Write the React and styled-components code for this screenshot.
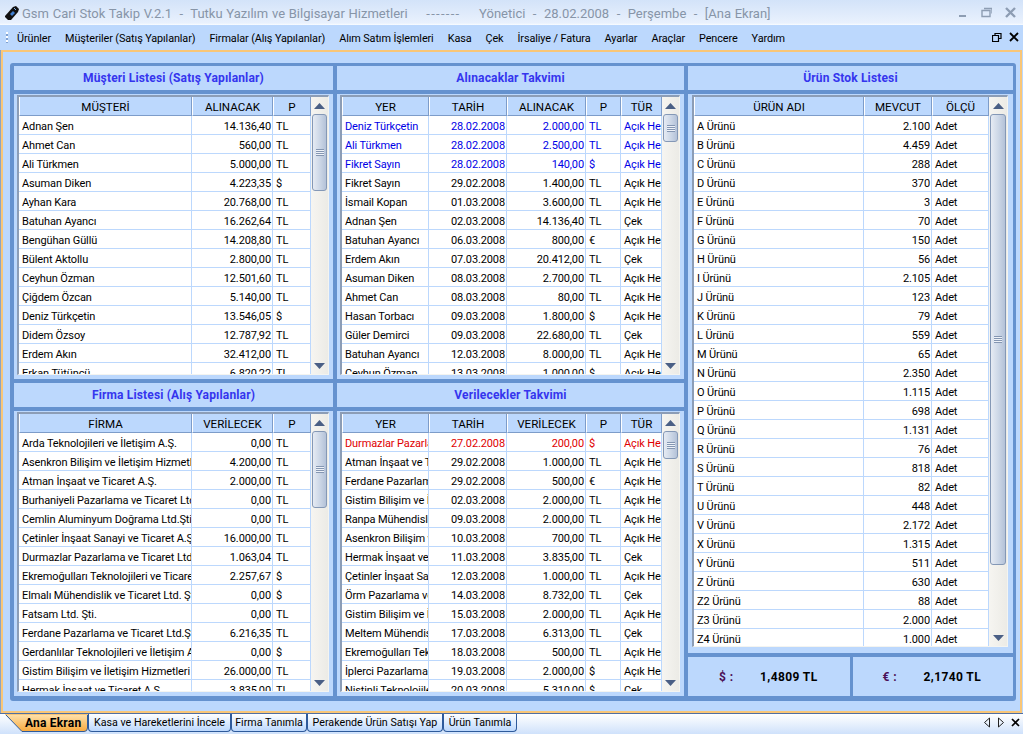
import React from "react";
import styled, { createGlobalStyle } from "styled-components";

const SKY = "#bcd8fd";
const STEEL = "#6592cf";
const FONT = `Roboto, "Liberation Sans", sans-serif`;

const GlobalStyle = createGlobalStyle`
  html, body {
    margin: 0;
    padding: 0;
    background: ${SKY};
  }
  * {
    box-sizing: border-box;
  }
`;

const Shell = styled.div`
  width: 1023px;
  height: 734px;
  display: flex;
  flex-direction: column;
  overflow: hidden;
  font-family: ${FONT};
  font-size: 11px;
  color: #000;
  background: ${SKY};
`;

const TitleBar = styled.div`
  height: 25px;
  flex: none;
  display: flex;
  align-items: center;
  padding: 0 6px 0 4px;
  background: linear-gradient(#d3e3f9, #e9f1fd 92%, #fafcff);
`;

const AppIcon = styled.svg`
  width: 16px;
  height: 16px;
  flex: none;
  margin-right: 2px;
`;

const TitleText = styled.div`
  flex: 1;
  padding-top: 1px;
  font-size: 13px;
  word-spacing: 0.5px;
  white-space: pre;
  color: #8795a8;
`;

const TitleDashes = styled.span`
  letter-spacing: 1.3px;
`;

const WinButtons = styled.div`
  display: flex;
  gap: 9px;
  align-items: center;
`;

const MenuBar = styled.div`
  height: 25px;
  flex: none;
  display: flex;
  align-items: center;
  padding: 0 3px 0 6px;
  background: ${SKY};
`;

const Grip = styled.div`
  width: 2px;
  height: 11px;
  margin-right: 9px;
  background: repeating-linear-gradient(#fff 0 2px, #7fa0d0 2px 4px);
`;

const MenuList = styled.div`
  flex: 1;
  display: flex;
  gap: 14px;
  padding-top: 2px;
`;

const MenuItem = styled.span`
  white-space: nowrap;
  font-size: 10.85px;
  letter-spacing: -0.1px;
`;

const MdiButtons = styled.div`
  display: flex;
  gap: 7px;
  align-items: center;
  margin-bottom: 2px;
  margin-right: 1px;
`;

const Workspace = styled.div`
  height: 663px;
  flex: none;
  padding: 11px 4px 10px 7px;
  border: 2px solid #f9c677;
  border-bottom-width: 2px;
  box-shadow: -1px 0 0 #8ba3c4;
  margin-left: 1px;
  margin-right: 1px;
`;

const Board = styled.div`
  height: 100%;
  display: grid;
  grid-template-columns: 319px 347px 325px;
  grid-template-rows: 313px 313px;
  gap: 4px;
  padding: 3px 3px 4px 4px;
  background: ${STEEL};
  border-radius: 3px;
`;

const Section = styled.section`
  display: flex;
  flex-direction: column;
  min-height: 0;
  background: ${SKY};
  flex: 1;
`;

const StockColumn = styled.div`
  grid-column: 3;
  grid-row: 1 / span 2;
  display: flex;
  flex-direction: column;
  gap: 4px;
  min-height: 0;
`;

const SectionTitle = styled.h2`
  margin: 0;
  height: 28px;
  flex: none;
  display: flex;
  align-items: center;
  justify-content: center;
  font-size: 12px;
  font-weight: 700;
  letter-spacing: 0.15px;
  color: #3535ee;
  border-bottom: 4px solid ${STEEL};
`;

const SectionBody = styled.div`
  flex: 1;
  min-height: 0;
  display: flex;
  padding: ${(p) => p.$inset};
`;

const Grid = styled.div`
  flex: 1;
  min-width: 0;
  display: flex;
  border-style: solid;
  border-width: 2px 1px 1px 2px;
  border-color: #8c9db6 #f4f4f0 #f4f4f0 #8c9db6;
  background: #fff;
  overflow: hidden;
`;

const GridTable = styled.div`
  flex: none;
  overflow: hidden;
  display: flex;
  flex-direction: column;
`;

const HeadRow = styled.div`
  display: grid;
  grid-template-columns: ${(p) => p.$cols};
  height: 19px;
  flex: none;
`;

const HeadCell = styled.div`
  display: flex;
  align-items: center;
  justify-content: center;
  padding-top: 1px;
  background: ${SKY};
  border-left: 1px solid #fff;
  border-right: 1px solid #7d9cc9;
  border-bottom: 1px solid #7d9cc9;
  font-size: 11.6px;
  white-space: nowrap;
  overflow: hidden;
`;

const Row = styled.div`
  display: grid;
  grid-template-columns: ${(p) => p.$cols};
  height: 19px;
  flex: none;
  color: ${(p) => p.$tone || "#000"};
`;

const Cell = styled.div`
  display: flex;
  align-items: center;
  justify-content: ${(p) => (p.$right ? "flex-end" : "flex-start")};
  padding: 2px 1px 0 3px;
  border-right: 1px solid ${SKY};
  border-bottom: 1px solid ${SKY};
  letter-spacing: -0.12px;
  white-space: nowrap;
  overflow: hidden;
`;

const ScrollBar = styled.div`
  flex: 1;
  display: flex;
  flex-direction: column;
  background: linear-gradient(90deg, #f6f5f1, #ecebe6);
`;

const ScrollArrow = styled.div`
  height: 17px;
  flex: none;
  display: flex;
  align-items: center;
  justify-content: center;
`;

const ScrollTrack = styled.div`
  flex: 1;
  min-height: 0;
  padding: 0 1px;
`;

const Thumb = styled.div`
  height: ${(p) => p.$size}px;
  display: flex;
  align-items: center;
  justify-content: center;
  border: 1px solid #8498b6;
  border-radius: 3px;
  background: linear-gradient(90deg, #e6ebf3, #cbd6e6 55%, #b4c2d8);
`;

const ThumbGrip = styled.div`
  width: 8px;
  height: 7px;
  background: repeating-linear-gradient(#8496b2 0 1px, #eef2f8 1px 2px);
`;

const RateRow = styled.div`
  height: 39px;
  flex: none;
  display: flex;
  gap: 3px;
`;

const RateBox = styled.div`
  flex: 1;
  display: flex;
  align-items: center;
  padding-left: ${(p) => p.$pad}px;
  background: ${SKY};
  font-size: 12px;
  font-weight: 700;
  letter-spacing: 0.4px;
`;

const RateSymbol = styled.span`
  width: 41px;
  color: #4b0f55;
`;

const TabBar = styled.div`
  flex: 1;
  display: flex;
  align-items: flex-start;
  padding: 0 0 0 5px;
  background: linear-gradient(#fff, #cfe1fb);
  border-top: 1px solid #4f6fa3;
`;

const ActiveTab = styled.div`
  position: relative;
  width: 83px;
  height: 18px;
  flex: none;
  padding: 0 0 1px 20px;
  display: flex;
  align-items: center;
  font-size: 12px;
  font-weight: 700;
  letter-spacing: 0.2px;
`;

const TabShape = styled.svg`
  position: absolute;
  left: 0;
  top: 0;
`;

const TabLabel = styled.span`
  position: relative;
`;

const Tab = styled.div`
  height: 18px;
  flex: none;
  width: ${(p) => p.$width}px;
  display: flex;
  align-items: center;
  justify-content: center;
  white-space: nowrap;
  font-size: 10.7px;
  border: 1px solid #2e5a9b;
  border-top: none;
  border-radius: 0 0 4px 4px;
  background: linear-gradient(#fff, #bcd8fd);
`;

const TabSpacer = styled.div`
  flex: 1;
`;

const TabNav = styled.div`
  display: flex;
  gap: 6px;
  align-items: center;
  padding: 3px 3px 0 0;
`;

const Triangle = ({ down }) => (
  <svg width="11" height="6" viewBox="0 0 11 6">
    <path d={down ? "M0 0H11L5.5 6Z" : "M5.5 0L11 6H0Z"} fill="#4a5f85" />
  </svg>
);

const Scroller = ({ thumb }) => (
  <ScrollBar>
    <ScrollArrow>
      <Triangle />
    </ScrollArrow>
    <ScrollTrack>
      <Thumb $size={thumb}>
        <ThumbGrip />
      </Thumb>
    </ScrollTrack>
    <ScrollArrow>
      <Triangle down />
    </ScrollArrow>
  </ScrollBar>
);

const DataTable = ({ widths, columns, rows, thumb, tones = {}, rightCols }) => {
  const cols = widths.map((w) => `${w}px`).join(" ");
  const total = widths.reduce((a, b) => a + b, 0);
  return (
    <Grid>
      <GridTable style={{ width: total }}>
        <HeadRow $cols={cols}>
          {columns.map((c) => (
            <HeadCell key={c}>{c}</HeadCell>
          ))}
        </HeadRow>
        {rows.map((r, i) => (
          <Row key={i} $cols={cols} $tone={tones[i]}>
            {r.map((v, j) => (
              <Cell key={j} $right={rightCols.includes(j)}>
                {v}
              </Cell>
            ))}
          </Row>
        ))}
      </GridTable>
      <Scroller thumb={thumb} />
    </Grid>
  );
};

const customers = [
  ["Adnan Şen", "14.136,40", "TL"],
  ["Ahmet Can", "560,00", "TL"],
  ["Ali Türkmen", "5.000,00", "TL"],
  ["Asuman Diken", "4.223,35", "$"],
  ["Ayhan Kara", "20.768,00", "TL"],
  ["Batuhan Ayancı", "16.262,64", "TL"],
  ["Bengühan Güllü", "14.208,80", "TL"],
  ["Bülent Aktollu", "2.800,00", "TL"],
  ["Ceyhun Özman", "12.501,60", "TL"],
  ["Çiğdem Özcan", "5.140,00", "TL"],
  ["Deniz Türkçetin", "13.546,05", "$"],
  ["Didem Özsoy", "12.787,92", "TL"],
  ["Erdem Akın", "32.412,00", "TL"],
  ["Erkan Tütüncü", "6.820,22", "TL"],
];

const receivables = [
  ["Deniz Türkçetin", "28.02.2008", "2.000,00", "TL", "Açık Hesap"],
  ["Ali Türkmen", "28.02.2008", "2.500,00", "TL", "Açık Hesap"],
  ["Fikret Sayın", "28.02.2008", "140,00", "$", "Açık Hesap"],
  ["Fikret Sayın", "29.02.2008", "1.400,00", "TL", "Açık Hesap"],
  ["İsmail Kopan", "01.03.2008", "3.600,00", "TL", "Açık Hesap"],
  ["Adnan Şen", "02.03.2008", "14.136,40", "TL", "Çek"],
  ["Batuhan Ayancı", "06.03.2008", "800,00", "€", "Açık Hesap"],
  ["Erdem Akın", "07.03.2008", "20.412,00", "TL", "Çek"],
  ["Asuman Diken", "08.03.2008", "2.700,00", "TL", "Açık Hesap"],
  ["Ahmet Can", "08.03.2008", "80,00", "TL", "Açık Hesap"],
  ["Hasan Torbacı", "09.03.2008", "1.800,00", "$", "Açık Hesap"],
  ["Güler Demirci", "09.03.2008", "22.680,00", "TL", "Çek"],
  ["Batuhan Ayancı", "12.03.2008", "8.000,00", "TL", "Açık Hesap"],
  ["Ceyhun Özman", "13.03.2008", "1.000,00", "$", "Açık Hesap"],
];

const suppliers = [
  ["Arda Teknolojileri ve İletişim A.Ş.", "0,00", "TL"],
  ["Asenkron Bilişim ve İletişim Hizmetleri", "4.200,00", "TL"],
  ["Atman İnşaat ve Ticaret A.Ş.", "2.000,00", "TL"],
  ["Burhaniyeli Pazarlama ve Ticaret Ltd.Şti.", "0,00", "TL"],
  ["Cemlin Aluminyum Doğrama Ltd.Şti.", "0,00", "TL"],
  ["Çetinler İnşaat Sanayi ve Ticaret A.Ş.", "16.000,00", "TL"],
  ["Durmazlar Pazarlama ve Ticaret Ltd.Şti.", "1.063,04", "TL"],
  ["Ekremoğulları Teknolojileri ve Ticaret A.Ş.", "2.257,67", "$"],
  ["Elmalı Mühendislik ve Ticaret Ltd. Şti.", "0,00", "$"],
  ["Fatsam Ltd. Şti.", "0,00", "TL"],
  ["Ferdane Pazarlama ve Ticaret Ltd.Şti.", "6.216,35", "TL"],
  ["Gerdanlılar Teknolojileri ve İletişim A.Ş.", "0,00", "$"],
  ["Gistim Bilişim ve İletişim Hizmetleri", "26.000,00", "TL"],
  ["Hermak İnşaat ve Ticaret A.Ş.", "3.835,00", "TL"],
];

const payables = [
  ["Durmazlar Pazarlama", "27.02.2008", "200,00", "$", "Açık Hesap"],
  ["Atman İnşaat ve Ticaret", "29.02.2008", "1.000,00", "TL", "Açık Hesap"],
  ["Ferdane Pazarlama", "29.02.2008", "500,00", "€", "Açık Hesap"],
  ["Gistim Bilişim ve İletişim", "02.03.2008", "2.000,00", "TL", "Açık Hesap"],
  ["Ranpa Mühendislik", "09.03.2008", "2.000,00", "TL", "Açık Hesap"],
  ["Asenkron Bilişim ve", "10.03.2008", "700,00", "TL", "Açık Hesap"],
  ["Hermak İnşaat ve", "11.03.2008", "3.835,00", "TL", "Çek"],
  ["Çetinler İnşaat Sanayi", "12.03.2008", "1.000,00", "TL", "Açık Hesap"],
  ["Örm Pazarlama ve", "14.03.2008", "8.732,00", "TL", "Çek"],
  ["Gistim Bilişim ve İletişim", "15.03.2008", "2.000,00", "TL", "Açık Hesap"],
  ["Meltem Mühendislik", "17.03.2008", "6.313,00", "TL", "Çek"],
  ["Ekremoğulları Teknolojileri", "18.03.2008", "500,00", "TL", "Açık Hesap"],
  ["İplerci Pazarlama", "19.03.2008", "2.000,00", "$", "Açık Hesap"],
  ["Nistinli Teknolojileri", "20.03.2008", "5.310,00", "$", "Çek"],
];

const stock = [
  ["A", "2.100"], ["B", "4.459"], ["C", "288"], ["D", "370"], ["E", "3"], ["F", "70"], ["G", "150"],
  ["H", "56"], ["I", "2.105"], ["J", "123"], ["K", "79"], ["L", "559"], ["M", "65"], ["N", "2.350"],
  ["O", "1.115"], ["P", "698"], ["Q", "1.131"], ["R", "76"], ["S", "818"], ["T", "82"], ["U", "448"],
  ["V", "2.172"], ["X", "1.315"], ["Y", "511"], ["Z", "630"], ["Z2", "88"], ["Z3", "2.000"], ["Z4", "1.000"],
].map(([n, q]) => [`${n} Ürünü`, q, "Adet"]);

const menus = [
  "Ürünler",
  "Müşteriler (Satış Yapılanlar)",
  "Firmalar (Alış Yapılanlar)",
  "Alım Satım İşlemleri",
  "Kasa",
  "Çek",
  "İrsaliye / Fatura",
  "Ayarlar",
  "Araçlar",
  "Pencere",
  "Yardım",
];

const LEFT = [173, 81, 38];
const MIDDLE = [87, 78, 79, 35, 41];
const RIGHT = [170, 68, 57];

export default function App() {
  return (
    <Shell>
      <GlobalStyle />
      <TitleBar>
        <AppIcon viewBox="0 0 16 16">
          <path d="M1 11L9 2l3-1 3 3-1 3-7 8-3 0-3-3z" fill="#111" />
          <path d="M6 9l3-3 2 2-3 3z" fill="#3f7fd0" />
          <path d="M10 3l2 2" stroke="#7fb0e8" strokeWidth="1" />
        </AppIcon>
        <TitleText>
          {"Gsm Cari Stok Takip V.2.1  -  Tutku Yazılım ve Bilgisayar Hizmetleri     "}
          <TitleDashes>-------</TitleDashes>
          {"     Yönetici  -  28.02.2008  -  Perşembe  -  [Ana Ekran]"}
        </TitleText>
        <WinButtons>
          <svg width="16" height="12" viewBox="0 0 16 12">
            <rect x="8" y="8" width="7" height="2" fill="#8d9db3" />
          </svg>
          <svg width="16" height="12" viewBox="0 0 16 12">
            <path d="M6 3.5h8v6H6z M8 1.5h8v5" fill="none" stroke="#8d9db3" strokeWidth="1.4" />
          </svg>
          <svg width="16" height="12" viewBox="0 0 16 12">
            <path d="M5 1l9 9M14 1l-9 9" stroke="#8d9db3" strokeWidth="2.4" />
          </svg>
        </WinButtons>
      </TitleBar>

      <MenuBar>
        <Grip />
        <MenuList>
          {menus.map((m) => (
            <MenuItem key={m}>{m}</MenuItem>
          ))}
        </MenuList>
        <MdiButtons>
          <svg width="10" height="10" viewBox="0 0 10 10">
            <path d="M3 1.5h6v5H7 M0.5 3.5h6v6h-6z M3 1v2" fill="none" stroke="#000" strokeWidth="1.2" />
          </svg>
          <svg width="10" height="10" viewBox="0 0 10 10">
            <path d="M1 1l8 8M9 1l-8 8" stroke="#000" strokeWidth="1.8" />
          </svg>
        </MdiButtons>
      </MenuBar>

      <Workspace>
        <Board>
          <Section>
            <SectionTitle>Müşteri Listesi (Satış Yapılanlar)</SectionTitle>
            <SectionBody $inset="1px 4px 4px 3px">
              <DataTable
                widths={LEFT}
                columns={["MÜŞTERİ", "ALINACAK", "P"]}
                rows={customers}
                thumb={77}
                rightCols={[1]}
              />
            </SectionBody>
          </Section>
          <Section>
            <SectionTitle>Alınacaklar Takvimi</SectionTitle>
            <SectionBody $inset="1px 4px 4px 3px">
              <DataTable
                widths={MIDDLE}
                columns={["YER", "TARİH", "ALINACAK", "P", "TÜR"]}
                rows={receivables}
                thumb={28}
                tones={{ 0: "#0000e6", 1: "#0000e6", 2: "#0000e6" }}
                rightCols={[1, 2]}
              />
            </SectionBody>
          </Section>
          <StockColumn>
            <Section>
              <SectionTitle>Ürün Stok Listesi</SectionTitle>
              <SectionBody $inset="1px 5px 6px 4px">
                <DataTable
                  widths={RIGHT}
                  columns={["ÜRÜN ADI", "MEVCUT", "ÖLÇÜ"]}
                  rows={stock}
                  thumb={451}
                  rightCols={[1]}
                />
              </SectionBody>
            </Section>
            <RateRow>
              <RateBox $pad={31}>
                <RateSymbol>$ :</RateSymbol>1,4809 TL
              </RateBox>
              <RateBox $pad={30}>
                <RateSymbol>€ :</RateSymbol>2,1740 TL
              </RateBox>
            </RateRow>
          </StockColumn>
          <Section>
            <SectionTitle>Firma Listesi (Alış Yapılanlar)</SectionTitle>
            <SectionBody $inset="1px 4px 4px 3px">
              <DataTable
                widths={LEFT}
                columns={["FİRMA", "VERİLECEK", "P"]}
                rows={suppliers}
                thumb={77}
                rightCols={[1]}
              />
            </SectionBody>
          </Section>
          <Section>
            <SectionTitle>Verilecekler Takvimi</SectionTitle>
            <SectionBody $inset="1px 4px 4px 3px">
              <DataTable
                widths={MIDDLE}
                columns={["YER", "TARİH", "VERİLECEK", "P", "TÜR"]}
                rows={payables}
                thumb={28}
                tones={{ 0: "#e00000" }}
                rightCols={[1, 2]}
              />
            </SectionBody>
          </Section>
        </Board>
      </Workspace>

      <TabBar>
        <ActiveTab>
          <TabShape width="83" height="18" viewBox="0 0 83 18">
            <defs>
              <linearGradient id="activeTabFill" x1="0" y1="0" x2="0" y2="1">
                <stop offset="0" stopColor="#fee3b0" />
                <stop offset="1" stopColor="#f9a93c" />
              </linearGradient>
            </defs>
            <path d="M0 0H82.5V14Q82.5 17.5 79 17.5H17Z" fill="url(#activeTabFill)" stroke="#2e5a9b" strokeWidth="1" />
            <path d="M0 0.5H83" stroke="#f9c677" strokeWidth="1" />
          </TabShape>
          <TabLabel>Ana Ekran</TabLabel>
        </ActiveTab>
        <Tab $width={143}>Kasa ve Hareketlerini İncele</Tab>
        <Tab $width={76}>Firma Tanımla</Tab>
        <Tab $width={136}>Perakende Ürün Satışı Yap</Tab>
        <Tab $width={74}>Ürün Tanımla</Tab>
        <TabSpacer />
        <TabNav>
          <svg width="8" height="11" viewBox="0 0 8 11">
            <path d="M6.5 1L1.5 5.5l5 4.5z" fill="none" stroke="#222" />
          </svg>
          <svg width="8" height="11" viewBox="0 0 8 11">
            <path d="M1.5 1l5 4.5-5 4.5z" fill="none" stroke="#222" />
          </svg>
          <svg width="9" height="9" viewBox="0 0 9 9">
            <path d="M1 1l7 7M8 1l-7 7" stroke="#000" strokeWidth="1.7" />
          </svg>
        </TabNav>
      </TabBar>
    </Shell>
  );
}
